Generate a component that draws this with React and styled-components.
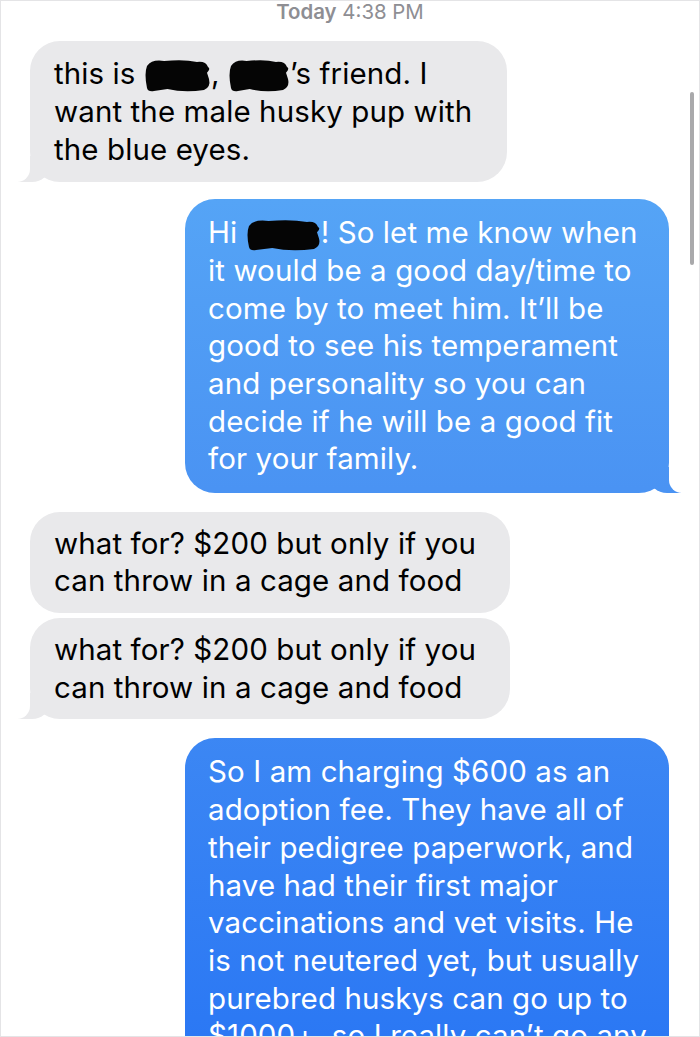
import React from "react";
import styled, { createGlobalStyle, css } from "styled-components";

const BLUE =
  "linear-gradient(to bottom, #5cadf8 0px, #55a4f6 200px, #4a93f3 490px, #2b78f4 1037px)";

const Global = createGlobalStyle`
  html, body { margin: 0; padding: 0; background: #fff; overflow: hidden; }
  body { font-family: Inter, "Liberation Sans", sans-serif; -webkit-font-smoothing: antialiased; }
`;

const Frame = styled.div`
  position: relative;
  width: 700px;
  height: 1037px;
  box-sizing: border-box;
  border: 1px solid #e4e4e6;
  background: #fff;
  overflow: hidden;
  display: flex;
  flex-direction: column;
`;

const Stamp = styled.div`
  text-align: center;
  font-size: 20.4px;
  line-height: 22px;
  color: #8e8e93;
  b { font-weight: 600; }
`;

const Thread = styled.div`
  display: flex;
  flex-direction: column;
  align-items: flex-start;
  padding-top: 18px;
`;

const Bubble = styled.div`
  position: relative;
  box-sizing: border-box;
  width: ${(p) => p.$w}px;
  margin-top: ${(p) => p.$gap || 0}px;
  padding: ${(p) => p.$padY}px 12px ${(p) => p.$padY}px ${(p) => (p.$me ? 23 : 24)}px;
  border-radius: 30px;
  font-size: 29.5px;
  line-height: 37.7px;
  letter-spacing: 0.1px;
  ${(p) =>
    p.$me
      ? css`
          margin-left: 184px;
          background: ${BLUE};
          background-attachment: fixed;
          color: #fff;
        `
      : css`
          margin-left: 29px;
          background: #e9e9eb;
          color: #000;
        `}
  ${(p) =>
    p.$tail &&
    (p.$me
      ? css`
          &::before {
            content: "";
            position: absolute;
            bottom: 0;
            right: -12px;
            width: 32px;
            height: 26px;
            background: ${BLUE};
            background-attachment: fixed;
            border-bottom-left-radius: 18px 16px;
          }
          &::after {
            content: "";
            position: absolute;
            bottom: 0;
            right: -24px;
            width: 24px;
            height: 27px;
            background: #fff;
            border-bottom-left-radius: 13px;
          }
        `
      : css`
          &::before {
            content: "";
            position: absolute;
            bottom: 0;
            left: -12px;
            width: 32px;
            height: 26px;
            background: #e9e9eb;
            border-bottom-right-radius: 18px 16px;
          }
          &::after {
            content: "";
            position: absolute;
            bottom: 0;
            left: -24px;
            width: 24px;
            height: 27px;
            background: #fff;
            border-bottom-right-radius: 13px;
          }
        `)}
`;

const Line = styled.span`
  position: relative;
  z-index: 1;
  display: block;
  white-space: nowrap;
`;

const Blot = styled.svg`
  display: inline-block;
  vertical-align: -9px;
`;

function Redact({ w, h = 35 }) {
  const d = `M3 8 Q0 ${h * 0.45} 3 ${h - 5} Q4 ${h - 1} 10 ${h - 2} L${w * 0.35} ${h - 4} Q${w * 0.6} ${h} ${w - 7} ${h - 3} Q${w} ${h - 6} ${w - 2} ${h * 0.6} L${w - 4} ${h * 0.42} Q${w} ${h * 0.3} ${w - 3} 9 Q${w - 5} 3 ${w - 14} 4 Q${w * 0.6} 1 ${w * 0.3} 3 Q8 1 3 8 Z`;
  return (
    <Blot width={w} height={h} viewBox={`0 0 ${w} ${h}`}>
      <path d={d} fill="#050505" />
    </Blot>
  );
}

const Scroll = styled.div`
  position: absolute;
  left: 689px;
  top: 91px;
  width: 4px;
  height: 173px;
  border-radius: 2px;
  background: #a9a9ab;
`;

export default function App() {
  return (
    <>
      <Global />
      <Frame>
        <Stamp>
          <b>Today</b> 4:38 PM
        </Stamp>
        <Thread>
          <Bubble $w={477} $padY={14} $tail>
            <Line>
              this is <Redact w={67} />, <Redact w={62} />’s friend. I
            </Line>
            <Line>want the male husky pup with</Line>
            <Line>the blue eyes.</Line>
          </Bubble>
          <Bubble $me $w={484} $padY={14.5} $gap={17} $tail>
            <Line>
              Hi <Redact w={75} h={34} />! So let me know when
            </Line>
            <Line>it would be a good day/time to</Line>
            <Line>come by to meet him. It’ll be</Line>
            <Line>good to see his temperament</Line>
            <Line>and personality so you can</Line>
            <Line>decide if he will be a good fit</Line>
            <Line>for your family.</Line>
          </Bubble>
          <Bubble $w={480} $padY={13} $gap={19}>
            <Line>what for? $200 but only if you</Line>
            <Line>can throw in a cage and food</Line>
          </Bubble>
          <Bubble $w={480} $padY={13} $gap={5} $tail>
            <Line>what for? $200 but only if you</Line>
            <Line>can throw in a cage and food</Line>
          </Bubble>
          <Bubble $me $w={484} $padY={15} $gap={19}>
            <Line>So I am charging $600 as an</Line>
            <Line>adoption fee. They have all of</Line>
            <Line>their pedigree paperwork, and</Line>
            <Line>have had their first major</Line>
            <Line>vaccinations and vet visits. He</Line>
            <Line>is not neutered yet, but usually</Line>
            <Line>purebred huskys can go up to</Line>
            <Line>$1000+, so I really can’t go any</Line>
            <Line>lower than that.</Line>
          </Bubble>
        </Thread>
        <Scroll />
      </Frame>
    </>
  );
}
